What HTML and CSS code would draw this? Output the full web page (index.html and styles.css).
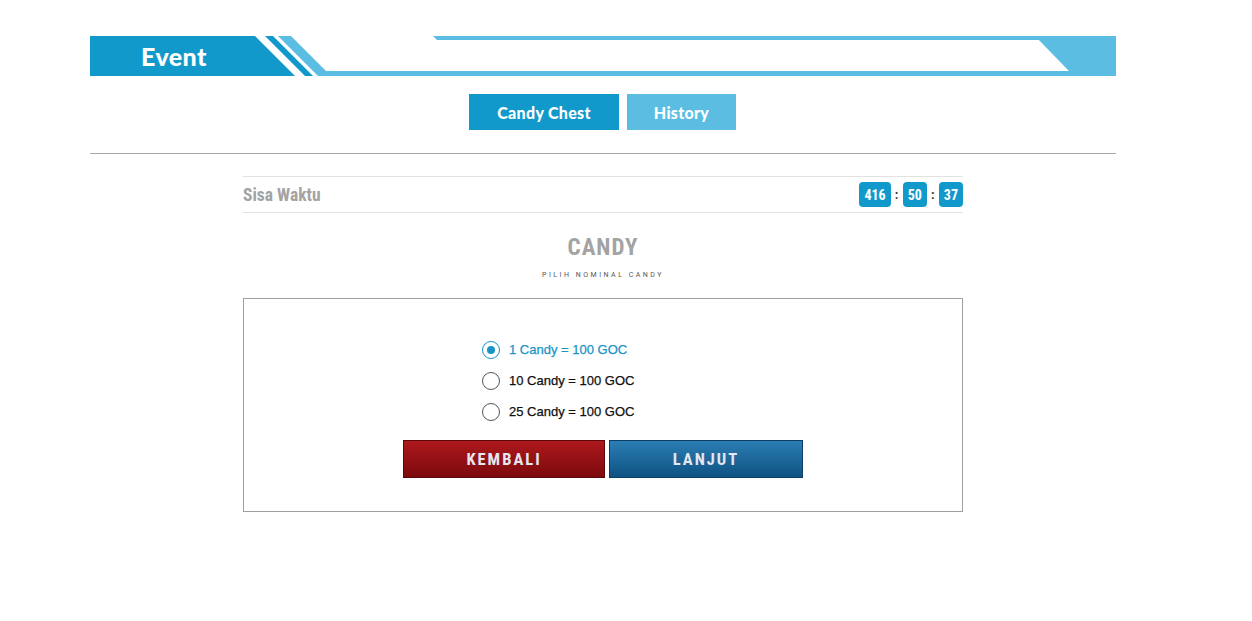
FILE: index.html
```html
<!DOCTYPE html>
<html lang="id">
<head>
  <meta charset="UTF-8">
  <title>Event - Candy Chest</title>
  <link rel="stylesheet" href="styles.css">
</head>
<body>
  <div class="page">
    <div class="banner">
      <svg class="banner-art" width="1026" height="40" viewBox="0 0 1026 40">
        <polygon points="0,0 165,0 205,40 0,40" fill="#1199cc"/>
        <polygon points="175,0 183,0 223,40 215,40" fill="#1199cc"/>
        <polygon points="188,0 201,0 236,35 1026,35 1026,40 228,40" fill="#5cbde3"/>
        <polygon points="343,0 1026,0 1026,4 347,4" fill="#5cbde3"/>
        <polygon points="945,0 1026,0 1026,35 979,35" fill="#5cbde3"/>
      </svg>
      <span class="banner-title">Event</span>
    </div>

    <div class="tabs">
      <a href="#" class="tab active">Candy Chest</a>
      <a href="#" class="tab">History</a>
    </div>

    <div class="divider"></div>

    <div class="content">
      <div class="timer-row">
        <span class="timer-label">Sisa Waktu</span>
        <div class="timer">
          <span class="badge">416</span>
          <span class="colon">:</span>
          <span class="badge">50</span>
          <span class="colon">:</span>
          <span class="badge">37</span>
        </div>
      </div>

      <h2 class="title">CANDY</h2>
      <p class="subtitle">PILIH NOMINAL CANDY</p>

      <div class="box">
        <div class="options">
          <label class="option selected">
            <span class="radio"></span>
            <span>1 Candy = 100 GOC</span>
          </label>
          <label class="option">
            <span class="radio"></span>
            <span>10 Candy = 100 GOC</span>
          </label>
          <label class="option">
            <span class="radio"></span>
            <span>25 Candy = 100 GOC</span>
          </label>
        </div>
        <div class="actions">
          <button class="btn back">KEMBALI</button>
          <button class="btn next">LANJUT</button>
        </div>
      </div>
    </div>
  </div>

  <script>
    document.querySelectorAll(".option").forEach(opt => {
      opt.addEventListener("click", () => {
        document.querySelectorAll(".option").forEach(o => o.classList.remove("selected"));
        opt.classList.add("selected");
      });
    });
  </script>
</body>
</html>
```

FILE: styles.css
```css
body {
  margin: 0;
  font-family: 'Roboto', 'Liberation Sans', sans-serif;
  background-color: white;
  color: #222;
}

.page {
  width: 1026px;
  margin: 36px 0 0 90px;
}

.banner {
  position: relative;
  height: 40px;
  display: flex;
  align-items: center;
}

.banner-art {
  position: absolute;
  left: 0;
  top: 0;
}

.banner-title {
  position: relative;
  margin-left: 51px;
  font-family: 'Lato', sans-serif;
  font-weight: 900;
  font-size: 25px;
  color: white;
  letter-spacing: 0.4px;
}

.tabs {
  display: flex;
  justify-content: center;
  gap: 8px;
  margin-top: 18px;
  padding-right: 1px;
}

.tab {
  display: flex;
  align-items: center;
  justify-content: center;
  height: 36px;
  font-family: 'Lato', sans-serif;
  font-weight: 900;
  font-size: 16px;
  letter-spacing: 0.3px;
  color: white;
  text-decoration: none;
  background-color: #5cbde3;
  width: 109px;
}

.tab.active {
  background-color: #1199cc;
  width: 150px;
}

.divider {
  margin-top: 23px;
  border-top: 1px solid #a8a8a8;
}

.content {
  width: 720px;
  margin: 22px auto 0;
}

.timer-row {
  display: flex;
  justify-content: space-between;
  align-items: center;
  height: 35px;
  border-top: 1px solid #e2e2e2;
  border-bottom: 1px solid #e2e2e2;
}

.timer-label {
  font-family: 'Roboto Condensed', 'DejaVu Sans Condensed', sans-serif;
  font-weight: bold;
  font-size: 17.5px;
  color: #a3a3a3;
}

.timer {
  display: flex;
  align-items: center;
}

.badge {
  background-color: #1199cc;
  color: white;
  border-radius: 4px;
  height: 25px;
  padding: 0 5px;
  min-width: 14px;
  display: flex;
  align-items: center;
  justify-content: center;
  font-family: 'Roboto Condensed', 'DejaVu Sans Condensed', sans-serif;
  font-weight: bold;
  font-size: 14px;
}

.colon {
  width: 12px;
  text-align: center;
  font-weight: bold;
  font-size: 13px;
  color: #333;
}

.title {
  margin: 22px 0 0;
  text-align: center;
  font-family: 'Roboto Condensed', 'DejaVu Sans Condensed', sans-serif;
  font-weight: bold;
  font-size: 23px;
  letter-spacing: 1px;
  color: #a3a3a3;
  line-height: 26px;
}

.subtitle {
  margin: 9px 0 0;
  text-align: center;
  font-size: 7px;
  letter-spacing: 2.5px;
  color: #555;
  line-height: 10px;
}

.box {
  margin-top: 18px;
  border: 1px solid #a0a0a0;
  height: 177px;
  padding: 35px 0 0;
}

.options {
  padding-left: 238px;
}

.option {
  display: flex;
  align-items: center;
  gap: 9px;
  height: 31px;
  font-family: 'Liberation Sans', sans-serif;
  font-size: 13px;
  color: #111;
  -webkit-text-stroke: 0.25px currentColor;
  cursor: pointer;
}

.radio {
  width: 16px;
  height: 16px;
  border: 1px solid #555;
  border-radius: 50%;
  display: flex;
  align-items: center;
  justify-content: center;
}

.option.selected {
  color: #1a93c6;
}

.option.selected .radio {
  border-color: #1a93c6;
}

.option.selected .radio::after {
  content: "";
  width: 8px;
  height: 8px;
  border-radius: 50%;
  background-color: #1a93c6;
}

.actions {
  display: flex;
  justify-content: center;
  gap: 4px;
  margin-top: 13px;
}

.btn {
  height: 38px;
  border: 1px solid #5a0a0a;
  font-family: 'Roboto Condensed', 'DejaVu Sans Condensed', sans-serif;
  font-weight: bold;
  font-size: 16.5px;
  letter-spacing: 2px;
  color: #e6e6f0;
  cursor: pointer;
}

.back {
  width: 202px;
  background: linear-gradient(#ad181d, #7c0a0d);
}

.next {
  width: 194px;
  border-color: #0b3f66;
  background: linear-gradient(#2b7db3, #0e5383);
}
```
